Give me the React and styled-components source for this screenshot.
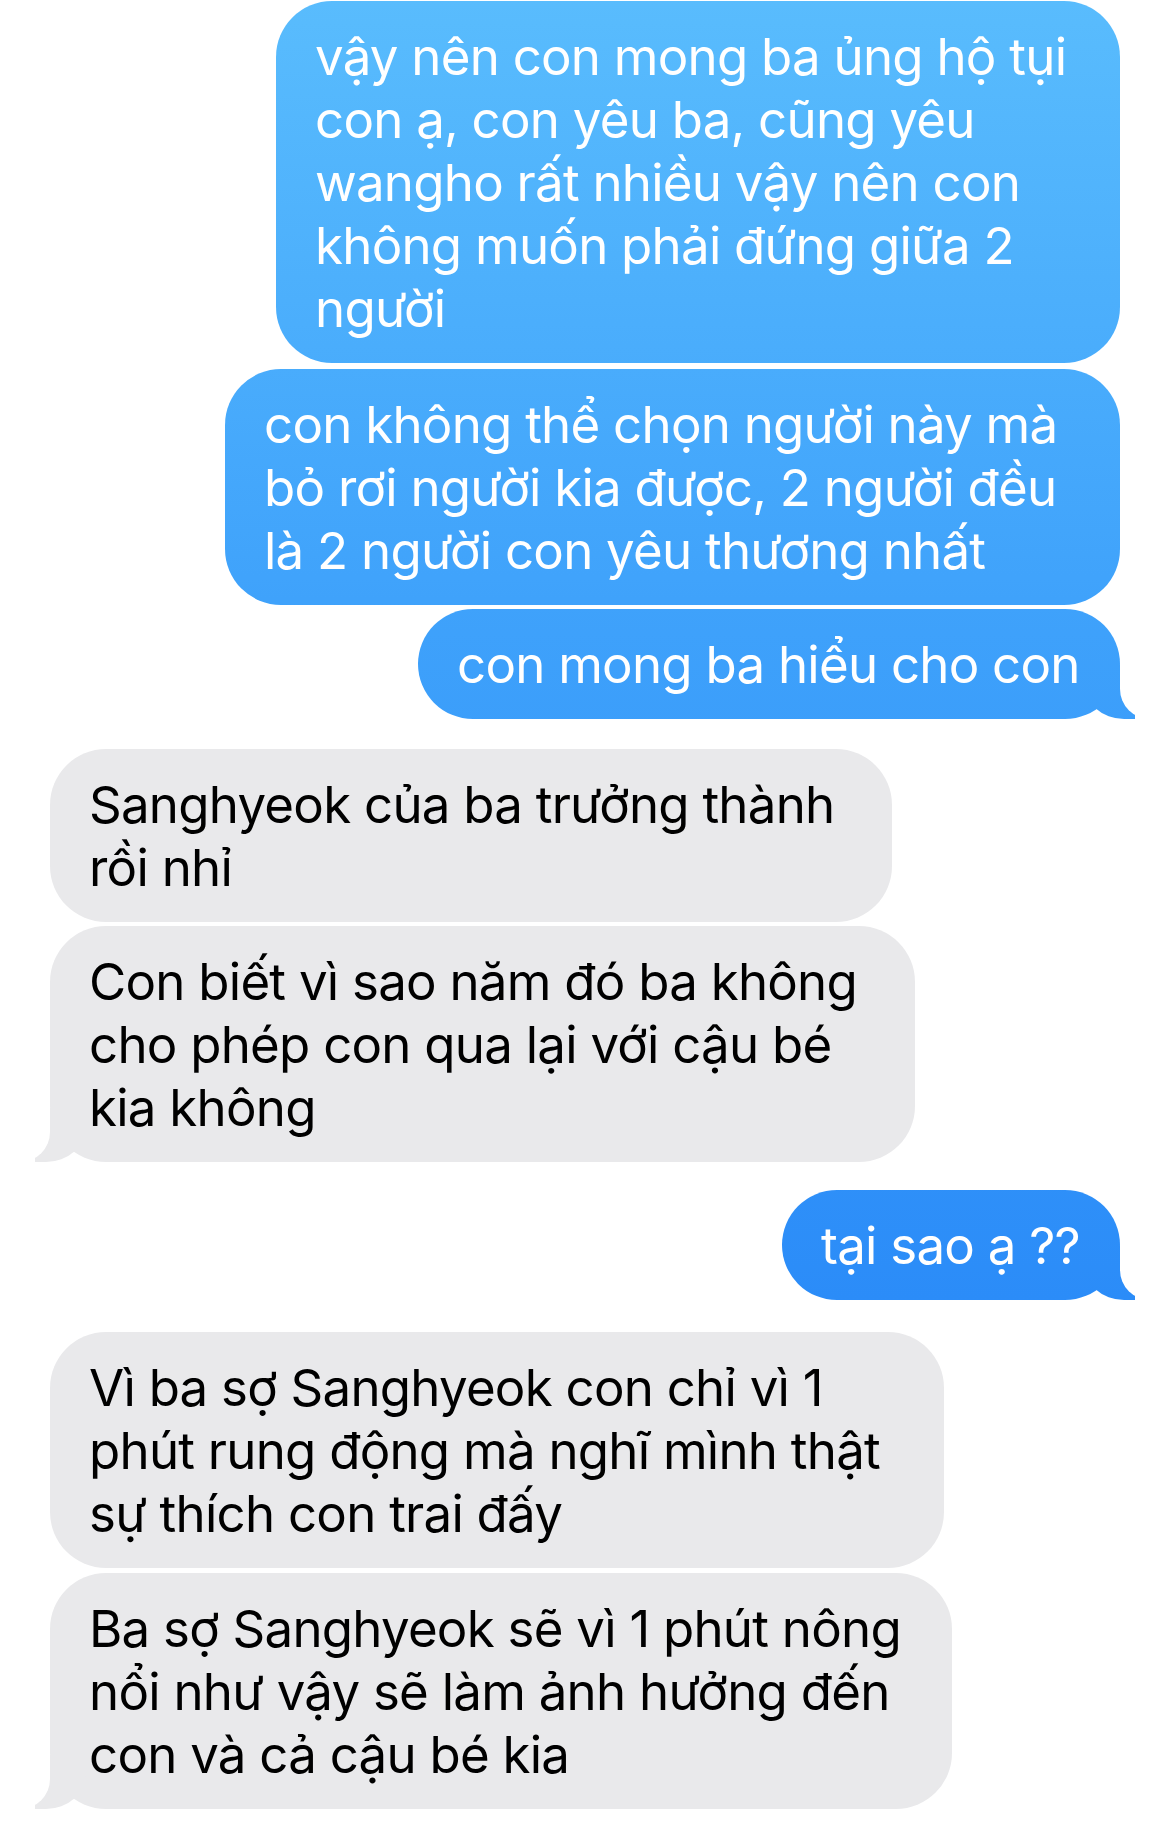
import React from "react";
import styled, { createGlobalStyle, css } from "styled-components";

const Global = createGlobalStyle`
  html, body { margin: 0; padding: 0; background: #ffffff; }
  body { font-family: "Inter", "Noto Sans", "Liberation Sans", sans-serif; }
`;

const BLUE = css`
  background: linear-gradient(180deg, #59bcfd 0px, #3fa2fb 600px, #2b8cf8 1300px, #2080f6 1829px) fixed;
`;
const GRAY = css`
  background: #e9e9eb;
`;

const Thread = styled.main`
  display: flex;
  flex-direction: column;
  width: 1170px;
  min-height: 1829px;
  box-sizing: border-box;
  padding: 1px 50px 0 50px;
`;

const Row = styled.div`
  display: flex;
  justify-content: ${(p) => (p.$me ? "flex-end" : "flex-start")};
  margin-top: ${(p) => p.$gap}px;
`;

const Bubble = styled.div`
  position: relative;
  box-sizing: border-box;
  width: ${(p) => p.$w}px;
  padding: 24px 20px 23px 39px;
  border-radius: 56px;
  font-size: 51px;
  line-height: 63px;
  letter-spacing: -0.75px;
  color: ${(p) => (p.$me ? "#ffffff" : "#000000")};
  ${(p) => (p.$me ? BLUE : GRAY)}

  ${(p) =>
    p.$tail &&
    css`
      &::before {
        content: "";
        position: absolute;
        bottom: 0;
        height: 54px;
        width: 51px;
        ${p.$me ? BLUE : GRAY}
        ${p.$me
          ? css`
              right: -15px;
              border-bottom-left-radius: 40px 36px;
            `
          : css`
              left: -15px;
              border-bottom-right-radius: 40px 36px;
            `}
      }
      &::after {
        content: "";
        position: absolute;
        bottom: 0;
        height: 54px;
        width: 60px;
        background: #ffffff;
        ${p.$me
          ? css`
              right: -60px;
              border-bottom-left-radius: 30px;
            `
          : css`
              left: -60px;
              border-bottom-right-radius: 30px;
            `}
      }
    `}
`;

const Line = styled.span`
  position: relative;
  z-index: 1;
  display: block;
  white-space: nowrap;
`;

const messages = [
  {
    me: true,
    w: 844,
    gap: 0,
    lines: [
      "vậy nên con mong ba ủng hộ tụi",
      "con ạ, con yêu ba, cũng yêu",
      "wangho rất nhiều vậy nên con",
      "không muốn phải đứng giữa 2",
      "người",
    ],
  },
  {
    me: true,
    w: 895,
    gap: 6,
    lines: [
      "con không thể chọn người này mà",
      "bỏ rơi người kia được, 2 người đều",
      "là 2 người con yêu thương nhất",
    ],
  },
  { me: true, w: 702, gap: 4, tail: true, lines: ["con mong ba hiểu cho con"] },
  {
    me: false,
    w: 842,
    gap: 30,
    lines: ["Sanghyeok của ba trưởng thành", "rồi nhỉ"],
  },
  {
    me: false,
    w: 865,
    gap: 4,
    tail: true,
    lines: [
      "Con biết vì sao năm đó ba không",
      "cho phép con qua lại với cậu bé",
      "kia không",
    ],
  },
  { me: true, w: 338, gap: 28, tail: true, lines: ["tại sao ạ ??"] },
  {
    me: false,
    w: 894,
    gap: 32,
    lines: [
      "Vì ba sợ Sanghyeok con chỉ vì 1",
      "phút rung động mà nghĩ mình thật",
      "sự thích con trai đấy",
    ],
  },
  {
    me: false,
    w: 902,
    gap: 5,
    tail: true,
    lines: [
      "Ba sợ Sanghyeok sẽ vì 1 phút nông",
      "nổi như vậy sẽ làm ảnh hưởng đến",
      "con và cả cậu bé kia",
    ],
  },
];

export default function App() {
  return (
    <>
      <Global />
      <Thread>
        {messages.map((m, i) => (
          <Row key={i} $me={m.me} $gap={m.gap}>
            <Bubble $me={m.me} $w={m.w} $tail={m.tail}>
              {m.lines.map((l, j) => (
                <Line key={j}>{l}</Line>
              ))}
            </Bubble>
          </Row>
        ))}
      </Thread>
    </>
  );
}
